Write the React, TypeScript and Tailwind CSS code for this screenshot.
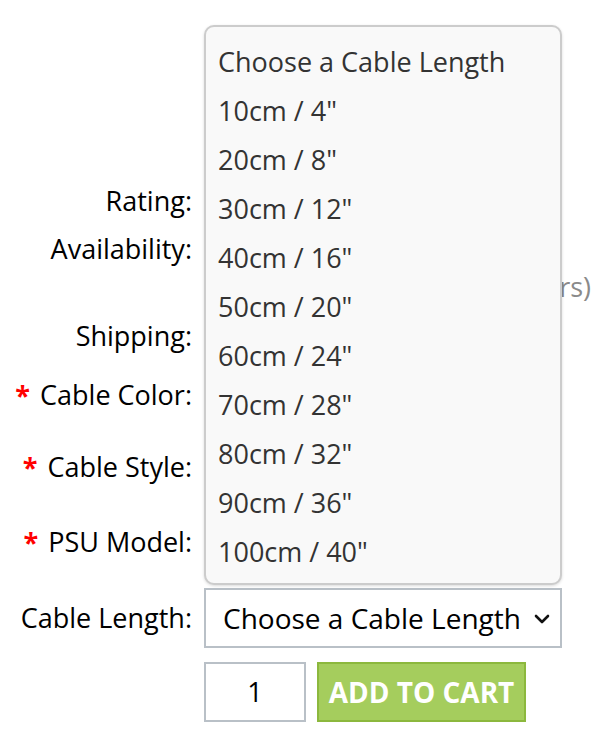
import React from "react";

const options = [
  "Choose a Cable Length",
  '10cm / 4"',
  '20cm / 8"',
  '30cm / 12"',
  '40cm / 16"',
  '50cm / 20"',
  '60cm / 24"',
  '70cm / 28"',
  '80cm / 32"',
  '90cm / 36"',
  '100cm / 40"',
];

function Label({ children, req }: { children: React.ReactNode; req?: boolean }) {
  return (
    <div className="w-[192px] shrink-0 text-right whitespace-nowrap">
      {req && <span className="text-[#ff0000] font-bold mr-[10px]">*</span>}
      {children}
    </div>
  );
}

export default function App() {
  return (
    <div
      className="relative w-[614px] h-[750px] bg-white text-black overflow-hidden"
      style={{ fontFamily: '"Open Sans", "Noto Sans", sans-serif' }}
    >
      <div className="flex flex-col pt-[177px] text-[27px] leading-[38px]">
        <div className="flex items-center gap-3 h-[48px]">
          <Label>Rating:</Label>
          <div />
        </div>
        <div className="flex items-start gap-3 h-[87px] pt-[5px]">
          <Label>Availability:</Label>
          <div className="w-[387px] flex flex-col items-end text-[#8a8a8a] whitespace-nowrap">
            <div className="self-start">In Stock</div>
            <div>(Ships in 24 hours)</div>
          </div>
        </div>
        <div className="flex items-center gap-3 h-[48px]">
          <Label>Shipping:</Label>
        </div>
        <div className="flex items-center gap-3 h-[70px]">
          <Label req>Cable Color:</Label>
        </div>
        <div className="flex items-center gap-3 h-[74px]">
          <Label req>Cable Style:</Label>
        </div>
        <div className="flex items-center gap-3 h-[76px]">
          <Label req>PSU Model:</Label>
        </div>
        <div className="flex items-center gap-3 h-[60px] mt-[8px]">
          <Label>Cable Length:</Label>
          <div className="w-[358px] h-[60px] border-2 border-[#b9c0c7] bg-white flex items-center justify-between pl-[17px] pr-[10px] text-[28px]">
            <span className="whitespace-nowrap">Choose a Cable Length</span>
            <svg width="16" height="12" viewBox="0 0 16 12" className="mt-[2px]">
              <path d="M2 3 L8 9 L14 3" fill="none" stroke="#111" strokeWidth="2.6" strokeLinecap="round" strokeLinejoin="round" />
            </svg>
          </div>
        </div>
        <div className="flex items-center gap-3 h-[60px] mt-[14px]">
          <div className="w-[192px] shrink-0" />
          <div className="w-[102px] h-[60px] border-2 border-[#b9c0c7] bg-white flex items-center justify-center">
            1
          </div>
          <button className="ml-[-1px] w-[209px] h-[60px] bg-[#a5cd5d] border-2 border-[#8cb83d] text-white text-[28px] font-bold uppercase flex items-center justify-center whitespace-nowrap">
            Add to Cart
          </button>
        </div>
      </div>

      <div className="absolute left-[204px] top-[25px] w-[358px] h-[560px] rounded-[10px] border-2 border-[#cccccc] bg-[#f9f9f9] shadow-[0_1px_3px_rgba(0,0,0,0.15)] pt-[11px] pb-[10px] px-[12px]">
        {options.map((o) => (
          <div key={o} className="h-[49px] flex items-center text-[27px] text-[#333333] whitespace-nowrap">
            {o}
          </div>
        ))}
      </div>
    </div>
  );
}
